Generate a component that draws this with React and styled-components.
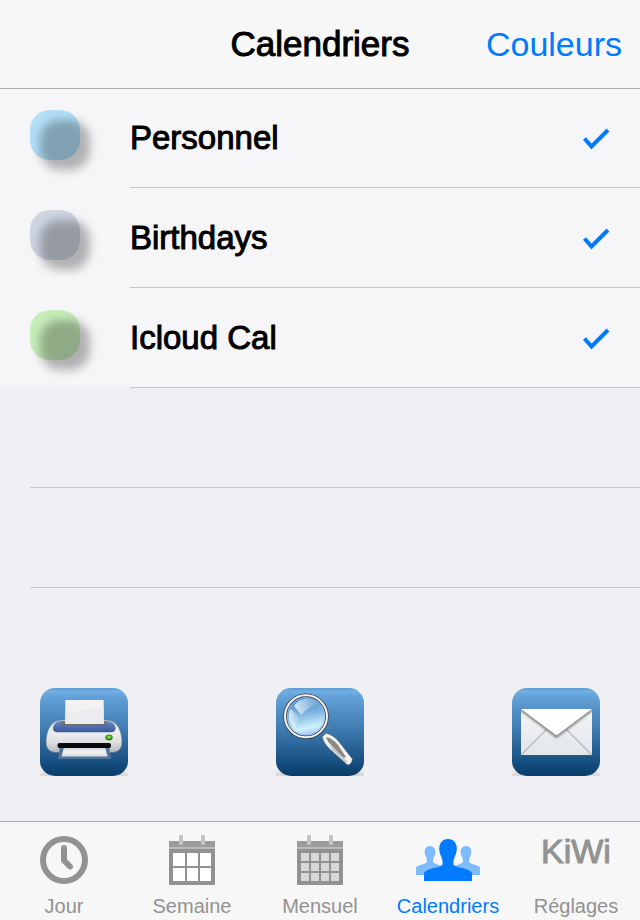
import React, { useState } from "react";
import styled, { createGlobalStyle } from "styled-components";

const GlobalStyle = createGlobalStyle`
  * {
    box-sizing: border-box;
  }
  body {
    margin: 0;
    background: #efeff4;
    color: #000;
    font-family: "Liberation Sans", Arial, sans-serif;
  }
`;

const Page = styled.div`
  display: flex;
  flex-direction: column;
  min-height: 100vh;
`;

const Header = styled.header`
  display: grid;
  grid-template-columns: 1fr auto 1fr;
  align-items: center;
  height: 88px;
  padding: 0 18px;
  background: #f7f7f7;
  box-shadow: 0 1px 0 #acacac;
  z-index: 1;
`;

const Title = styled.h1`
  grid-column: 2;
  margin: 0;
  font-size: 35px;
  font-weight: 400;
  line-height: 40px;
  -webkit-text-stroke: 1px #000;
`;

const HeaderButton = styled.button`
  justify-self: end;
  padding: 0;
  border: 0;
  background: none;
  color: #007aff;
  font-family: inherit;
  font-size: 34px;
  line-height: 40px;
  cursor: pointer;
`;

const Main = styled.main`
  display: flex;
  flex-direction: column;
  flex: 1;
`;

const List = styled.ul`
  margin: 0;
  padding: 0;
  list-style: none;
`;

const Row = styled.li`
  background: #f6f6f9;
`;

const RowLabel = styled.label`
  display: flex;
  height: 100px;
  padding-left: 30px;
  cursor: pointer;
`;

const RowBody = styled.span`
  display: flex;
  flex: 1;
  align-items: center;
  justify-content: space-between;
  margin-left: 50px;
  padding-right: 30px;
  border-bottom: 1px solid #c8c7cc;
`;

const EmptyRow = styled.li`
  height: 100px;
  margin-left: 30px;
  border-bottom: 1px solid #c8c7cc;
`;

const Swatch = styled.span`
  position: relative;
  width: 50px;
  height: 50px;
  margin-top: 22px;
  border-radius: 20px;
  background: ${(props) => props.$color};

  &::after {
    content: "";
    position: absolute;
    top: 10px;
    left: 10px;
    width: 50px;
    height: 50px;
    border-radius: 20px;
    background: rgba(0, 0, 0, 0.28);
    filter: blur(5px);
  }
`;

const Name = styled.span`
  font-size: 33px;
  line-height: 40px;
  -webkit-text-stroke: 1px #000;
`;

const CheckBox = styled.span`
  position: relative;
  display: flex;
  width: 28px;
  height: 24px;

  input {
    position: absolute;
    inset: 0;
    width: 100%;
    height: 100%;
    margin: 0;
    opacity: 0;
  }
  input:not(:checked) + svg {
    visibility: hidden;
  }
`;

const Actions = styled.div`
  display: flex;
  justify-content: space-between;
  margin-top: auto;
  padding: 40px 40px 45px;
`;

const ActionButton = styled.button`
  display: flex;
  padding: 0;
  border: 0;
  background: none;
  cursor: pointer;
`;

const TabBar = styled.nav`
  display: grid;
  grid-template-columns: repeat(5, 1fr);
  height: 99px;
  border-top: 1px solid #a9a9ab;
  background: #f7f7f7;
`;

const Tab = styled.a`
  display: flex;
  flex-direction: column;
  align-items: center;
  gap: 9px;
  padding-top: 13px;
  color: ${(props) => (props.$active ? "#007aff" : "#929292")};
  font-size: 20px;
  line-height: 24px;
  text-decoration: none;
`;

const TabIcon = styled.span`
  display: flex;
  align-items: center;
  height: 50px;
`;

const Brand = styled.span`
  align-self: flex-start;
  font-size: 34px;
  line-height: 32px;
  -webkit-text-stroke: 1px #929292;
`;

function Check() {
  return (
    <svg width="28" height="24" viewBox="0 0 28 24" fill="none">
      <path d="M2.500 12.500 L9.500 20.500 L26 4" stroke="#007aff" strokeWidth="4" />
    </svg>
  );
}

// blue glossy square shared by the three action buttons
function Tile({ id, children }) {
  return (
    <svg width="88" height="88" viewBox="0 0 88 88" aria-hidden="true">
      <defs>
        <linearGradient id={`${id}-bg`} x1="0" y1="0" x2="0" y2="1">
          <stop offset="0" stopColor="#5c9bd2" />
          <stop offset="0.04" stopColor="#71aee4" />
          <stop offset="0.1" stopColor="#62a0d8" />
          <stop offset="0.5" stopColor="#3b78ad" />
          <stop offset="0.9" stopColor="#114878" />
          <stop offset="1" stopColor="#0b3c67" />
        </linearGradient>
        <linearGradient id={`${id}-edge`} x1="0" y1="0" x2="0" y2="1">
          <stop offset="0.93" stopColor="#efeff4" />
          <stop offset="1" stopColor="#d6d6da" />
        </linearGradient>
      </defs>
      <rect width="88" height="88" fill={`url(#${id}-edge)`} />
      <rect width="88" height="88" rx="15" fill={`url(#${id}-bg)`} />
      {children}
    </svg>
  );
}

function PrinterIcon() {
  return (
    <Tile id="printer">
      <defs>
        <linearGradient id="printer-body" x1="0" y1="0" x2="0" y2="1">
          <stop offset="0" stopColor="#dcdee2" />
          <stop offset="0.4" stopColor="#eeeeef" />
          <stop offset="0.7" stopColor="#dddee1" />
          <stop offset="1" stopColor="#b3b7be" />
        </linearGradient>
        <linearGradient id="printer-panel" x1="0" y1="0" x2="0" y2="1">
          <stop offset="0" stopColor="#6c8bc0" />
          <stop offset="1" stopColor="#34569a" />
        </linearGradient>
        <linearGradient id="printer-out" x1="0" y1="0" x2="0" y2="1">
          <stop offset="0" stopColor="#c9cccf" />
          <stop offset="0.5" stopColor="#f3f4f5" />
          <stop offset="1" stopColor="#dadcdf" />
        </linearGradient>
      </defs>
      <path
        d="M22 32 H66 C72 32 76 35 79 40 C81 44 82 49 82 54 C82 61 78 64.500 72 64.500 H16 C10 64.500 6 61 6 54 C6 49 7 44 9 40 C12 35 16 32 22 32 Z"
        fill="url(#printer-body)"
        stroke="#5b7894"
        strokeWidth="0.7"
      />
      <path
        d="M21 33 H67 C72 33 75.500 37 75.500 40.500 C75.500 43.500 73 44.300 69 44.300 H19 C15 44.300 13 43.500 13 40.500 C13 37 16 33 21 33 Z"
        fill="url(#printer-panel)"
      />
      <path d="M23 34 H65 L67 37.500 H21 Z" fill="#6c6b70" />
      <path d="M25.300 12 H63.700 V36 H25.300 Z" fill="#f2f2f3" />
      <path d="M25.300 24 C35 27 45 18 63.700 21 V36 H25.300 Z" fill="#ebecee" />
      <path d="M20 58 H69 L71 71 H18 Z" fill="#4f7599" />
      <path d="M24 59 H65 L67.500 68.500 H21.500 Z" fill="url(#printer-out)" />
      <rect x="17.500" y="55" width="53.500" height="5" rx="2" fill="#0a0a0c" />
      <ellipse cx="69" cy="49.500" rx="3.700" ry="2.900" fill="#378b1b" />
      <ellipse cx="69" cy="49" rx="2.400" ry="1.600" fill="#78d13f" />
    </Tile>
  );
}

function SearchIcon() {
  return (
    <Tile id="search">
      <defs>
        <linearGradient id="search-glass" x1="0.3" y1="0" x2="0.5" y2="1">
          <stop offset="0" stopColor="#4387c0" />
          <stop offset="0.45" stopColor="#7cb4e0" />
          <stop offset="0.8" stopColor="#cdf0fa" />
          <stop offset="1" stopColor="#a3c0f8" />
        </linearGradient>
        <linearGradient id="search-shine" x1="0" y1="0.3" x2="1" y2="0.3">
          <stop offset="0" stopColor="#fff" stopOpacity="0.75" />
          <stop offset="1" stopColor="#fff" stopOpacity="0.05" />
        </linearGradient>
      </defs>
      <circle cx="30" cy="28.300" r="20" fill="url(#search-glass)" />
      <circle cx="30" cy="28.300" r="18.500" fill="none" stroke="#9dbdfa" strokeWidth="1" opacity="0.7" />
      <path
        d="M18 18 C22 12 28 10 34 11 C38 12 41 13 43 16 C36 17 30 21 25.500 27 Z"
        fill="url(#search-shine)"
      />
      <path
        d="M14.500 21 L24 29 C21 33 20 37 19 41 C14 36 11 29 14.500 21 Z"
        fill="url(#search-shine)"
      />
      <circle cx="30" cy="28.300" r="21" fill="none" stroke="#3a4350" strokeWidth="3.600" />
      <circle cx="30" cy="28.300" r="21" fill="none" stroke="#f4f4f4" strokeWidth="2" />
      <path
        d="M46 49 L50 45 C55 46.500 59 49 62.500 53 L76.500 71 C76 75 74 77 71.500 77 L54 61.500 C50 57.500 47.500 54 46 49 Z"
        fill="#f3f3f3"
        stroke="#41586f"
        strokeWidth="0.7"
      />
      <path d="M50 49 C55 50 59 53 62 57 L70 69 L67 70 L57 59 C54 56 51 53 50 49 Z" fill="#8d8985" />
      <path d="M53 54 L59 61 L72 74 L70 75 L56 62 Z" fill="#c9c9c9" />
    </Tile>
  );
}

function MailIcon() {
  return (
    <Tile id="mail">
      <defs>
        <linearGradient id="mail-paper" x1="0" y1="0" x2="0" y2="1">
          <stop offset="0" stopColor="#f6f6f7" />
          <stop offset="1" stopColor="#e1e5e9" />
        </linearGradient>
        <filter id="mail-shadow" x="-10%" y="-10%" width="120%" height="140%">
          <feGaussianBlur stdDeviation="1.2" />
        </filter>
      </defs>
      <rect x="9" y="21" width="71" height="46" fill="url(#mail-paper)" />
      <path d="M9 67 L35 41 M80 67 L54 41" stroke="#b5b8bb" strokeWidth="1.2" />
      <path
        d="M9 22 L44.500 49 L80 22"
        fill="none"
        stroke="#666"
        strokeWidth="1.6"
        filter="url(#mail-shadow)"
      />
      <path d="M9 21 H80 L46 46.500 Q44.500 47.800 43 46.500 Z" fill="#fff" />
      <path
        d="M9 21.500 L43 46.800 Q44.500 48 46 46.800 L80 21.500"
        fill="none"
        stroke="#8b8b8b"
        strokeWidth="0.8"
      />
    </Tile>
  );
}

function ClockIcon() {
  return (
    <svg width="48" height="48" viewBox="0 0 48 48" fill="none" stroke="#929292" strokeWidth="6">
      <circle cx="24" cy="24" r="21" />
      <path d="M24 12 V24.500 L30 30.500" strokeLinecap="round" strokeLinejoin="round" />
    </svg>
  );
}

function CalendarIcon({ columns, rows, cellHeight, cellColor }) {
  return (
    <svg width="46" height="50" viewBox="0 0 46 50">
      <rect y="6" width="46" height="44" rx="1" fill="#929292" />
      <rect y="6" width="46" height="6" rx="1" fill="#9c9c9c" />
      <rect y="12" width="46" height="2" fill="#b9b9b9" />
      <rect x="10" width="4" height="10" rx="1" fill="#c2c2c2" />
      <rect x="32" width="4" height="10" rx="1" fill="#c2c2c2" />
      {rows.map((y) =>
        columns.map(([x, width]) => (
          <rect key={`${x}-${y}`} x={x} y={y} width={width} height={cellHeight} fill={cellColor} />
        ))
      )}
    </svg>
  );
}

function PeopleIcon() {
  return (
    <svg width="64" height="42" viewBox="0 0 64 42">
      <g fill="#7fbcff">
        <path d="M0 36 V28 C3 26 7 25.500 10 24 C11.500 23 11 20 10 18 C9 16 8.500 14 8.700 12 C9 9 11 7 14 7 C17 7 19 9 19.300 12 C19.500 14 19 16 18 18 C17 20 16.500 23 18 24 L28 28 V36 Z" />
        <path d="M64 36 V28 C61 26 57 25.500 54 24 C52.500 23 53 20 54 18 C55 16 55.500 14 55.300 12 C55 9 53 7 50 7 C47 7 45 9 44.700 12 C44.500 14 45 16 46 18 C47 20 47.500 23 46 24 L36 28 V36 Z" />
      </g>
      <path
        d="M8 42 V34 C10 31 14 30 18 29 C23 28 26 27 26.500 25.500 C27 22 26 20 25 17 C23.500 14 23 11 23.300 8 C24 3 27 0 32 0 C37 0 40 3 40.700 8 C41 11 40.500 14 39 17 C38 20 37 22 37.500 25.500 C38 27 41 28 46 29 C50 30 54 31 56 34 V42 Z"
        fill="#007aff"
      />
    </svg>
  );
}

const initialCalendars = [
  { id: "personnel", name: "Personnel", color: "#b2dff7", checked: true },
  { id: "birthdays", name: "Birthdays", color: "#cfd6e2", checked: true },
  { id: "icloud", name: "Icloud Cal", color: "#c7edba", checked: true },
];

const weekColumns = [[4, 12], [18, 11], [31, 11]];
const monthColumns = [[4, 8], [14, 8], [24, 8], [34, 8]];

const tabs = [
  { label: "Jour", icon: <ClockIcon /> },
  {
    label: "Semaine",
    icon: <CalendarIcon columns={weekColumns} rows={[18, 33]} cellHeight={13} cellColor="#fff" />,
  },
  {
    label: "Mensuel",
    icon: (
      <CalendarIcon columns={monthColumns} rows={[18, 28, 38]} cellHeight={8} cellColor="#d8d8d8" />
    ),
  },
  { label: "Calendriers", icon: <PeopleIcon />, active: true },
  { label: "Réglages", icon: <Brand>KiWi</Brand> },
];

function App() {
  const [calendars, setCalendars] = useState(initialCalendars);

  const handleToggle = (id) => {
    setCalendars(
      calendars.map((item) => (item.id === id ? { ...item, checked: !item.checked } : item))
    );
  };

  return (
    <Page>
      <GlobalStyle />
      <Header>
        <Title>Calendriers</Title>
        <HeaderButton type="button">Couleurs</HeaderButton>
      </Header>

      <Main>
        <List>
          {calendars.map((item) => (
            <Row key={item.id}>
              <RowLabel htmlFor={item.id}>
                <Swatch $color={item.color} />
                <RowBody>
                  <Name>{item.name}</Name>
                  <CheckBox>
                    <input
                      type="checkbox"
                      id={item.id}
                      checked={item.checked}
                      onChange={() => handleToggle(item.id)}
                    />
                    <Check />
                  </CheckBox>
                </RowBody>
              </RowLabel>
            </Row>
          ))}
          <EmptyRow />
          <EmptyRow />
        </List>

        <Actions>
          <ActionButton type="button" aria-label="Imprimer">
            <PrinterIcon />
          </ActionButton>
          <ActionButton type="button" aria-label="Rechercher">
            <SearchIcon />
          </ActionButton>
          <ActionButton type="button" aria-label="Envoyer">
            <MailIcon />
          </ActionButton>
        </Actions>
      </Main>

      <TabBar>
        {tabs.map((tab) => (
          <Tab key={tab.label} href="#" $active={tab.active}>
            <TabIcon>{tab.icon}</TabIcon>
            {tab.label}
          </Tab>
        ))}
      </TabBar>
    </Page>
  );
}

export default App;
